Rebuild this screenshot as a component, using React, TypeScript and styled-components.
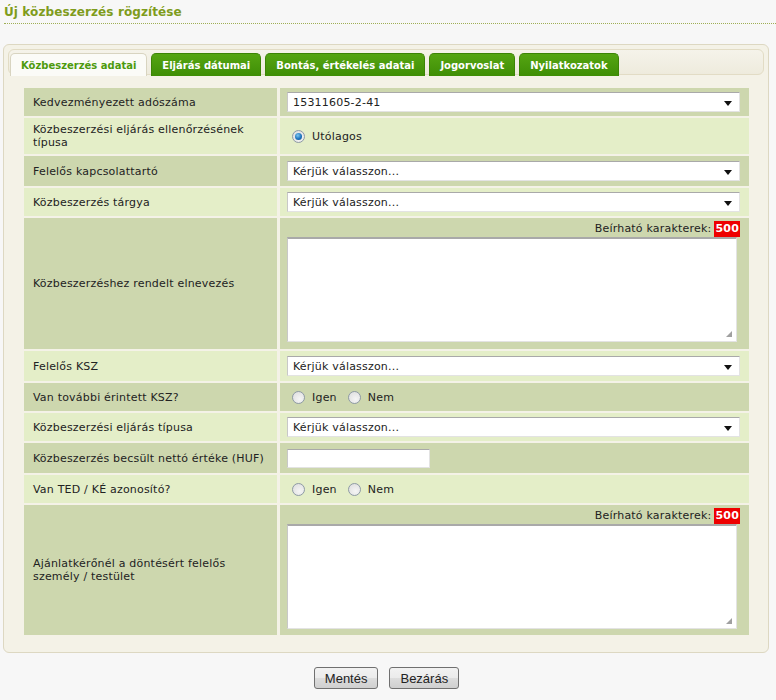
import React from "react";
import styled, { createGlobalStyle } from "styled-components";

const Global = createGlobalStyle`
  html, body { margin: 0; padding: 0; background: #f7f7f7; }
  body { font-family: "DejaVu Sans", Verdana, sans-serif; font-size: 11px; letter-spacing: 0.2px; color: #222; }
`;

const Page = styled.div`
  width: 776px;
  padding-top: 5px;
`;

const Title = styled.h2`
  margin: 0 0 0 4px;
  padding: 0 0 3px 0;
  font-size: 12px;
  letter-spacing: 0.1px;
  font-weight: bold;
  color: #7f9c1c;
  border-bottom: 1px dotted #9fae55;
  line-height: 15px;
`;

const Panel = styled.div`
  margin: 20px 7px 0 3px;
  background: #f4f2e7;
  border: 1px solid #ddd8c2;
  border-radius: 6px;
  padding: 4px 4px 17px 4px;
`;

const TabBar = styled.div`
  display: flex;
  gap: 4px;
  height: 26px;
  padding: 3px 0 0 1px;
  box-sizing: border-box;
  border: 1px solid #e2dcc5;
  border-radius: 6px;
  background: linear-gradient(#f5f3ea, #eeebdd);
`;

const Tab = styled.div<{ $active?: boolean }>`
  display: flex;
  align-items: center;
  padding: 0 10px;
  height: 23px;
  box-sizing: border-box;
  border-radius: 5px 5px 0 0;
  font-size: 10px;
  letter-spacing: 0;
  font-weight: bold;
  color: ${(p) => (p.$active ? "#4d9a0c" : "#fff")};
  background: ${(p) => (p.$active ? "#fbfbf7" : "linear-gradient(#55a512, #3f8e06)")};
  border: 1px solid ${(p) => (p.$active ? "#d8d4c0" : "#3c8406")};
  border-bottom: none;
`;

const Form = styled.div`
  display: grid;
  grid-template-columns: 253px 1fr;
  gap: 2px 3px;
  margin: 13px 15px 0 16px;
`;

const Label = styled.div<{ $dark: boolean; $h: number }>`
  display: flex;
  align-items: center;
  height: ${(p) => p.$h}px;
  padding: 0 10px 0 9px;
  box-sizing: border-box;
  background: ${(p) => (p.$dark ? "#cdd7ae" : "#e4eec8")};
  line-height: 13px;
`;

const Field = styled.div<{ $dark: boolean; $h: number }>`
  display: flex;
  align-items: center;
  gap: 4px;
  height: ${(p) => p.$h}px;
  padding: 0 0 0 7px;
  box-sizing: border-box;
  background: ${(p) => (p.$dark ? "#cdd7ae" : "#e4eec8")};
`;

const AreaField = styled(Field)`
  flex-direction: column;
  align-items: stretch;
  justify-content: flex-start;
  gap: 0;
  padding: 3px 12px 0 7px;
`;

const SelectBox = styled.div`
  position: relative;
  width: 453px;
  height: 20px;
  box-sizing: border-box;
  background: #fff;
  border: 1px solid #e3e3e3;
  border-top-color: #a9a9a9;
  border-left-color: #c8c8c8;
  padding: 0 0 0 5px;
  display: flex;
  align-items: center;
  font-size: 11px;
  &::after {
    content: "";
    position: absolute;
    right: 7px;
    top: 8px;
    border-left: 4px solid transparent;
    border-right: 4px solid transparent;
    border-top: 5px solid #111;
  }
`;

const TextInput = styled.div`
  width: 143px;
  height: 19px;
  box-sizing: border-box;
  background: #fff;
  border: 1px solid #e3e3e3;
  border-top-color: #a9a9a9;
  border-left-color: #c8c8c8;
`;

const Radio = styled.span<{ $checked?: boolean }>`
  position: relative;
  display: inline-block;
  width: 13px;
  height: 13px;
  box-sizing: border-box;
  border-radius: 50%;
  border: 1px solid #8e9aa5;
  background: radial-gradient(circle at 60% 65%, #f5f5f5 0%, #dcdcdc 100%);
  margin: 0 3px 0 5px;
  &::after {
    content: "";
    display: ${(p) => (p.$checked ? "block" : "none")};
    position: absolute;
    left: 2px;
    top: 2px;
    width: 7px;
    height: 7px;
    border-radius: 50%;
    background: radial-gradient(circle at 40% 35%, #7ec8f0 0%, #1e73be 55%, #0d4e8c 100%);
  }
`;

const RadioLabel = styled.span`
  margin-right: 2px;
`;

const Counter = styled.div`
  align-self: flex-end;
  margin-right: -3px;
  height: 16px;
  line-height: 16px;
  display: flex;
  gap: 3px;
`;

const CounterValue = styled.span`
  background: #ee0000;
  color: #fff;
  font-weight: bold;
  padding: 0 1px;
`;

const TextArea = styled.div`
  position: relative;
  width: 450px;
  height: 105px;
  box-sizing: border-box;
  background: #fff;
  border: 1px solid #e3e3e3;
  border-top: 2px solid #a9a9a9;
  border-left-color: #c8c8c8;
  &::after {
    content: "";
    position: absolute;
    right: 4px;
    bottom: 4px;
    width: 6px;
    height: 6px;
    background: radial-gradient(circle, #999 0.7px, transparent 0.8px) 0 0 / 2px 2px;
    clip-path: polygon(100% 0, 100% 100%, 0 100%);
  }
`;

const Buttons = styled.div`
  display: flex;
  justify-content: center;
  gap: 11px;
  margin-top: 14px;
  padding-right: 3px;
`;

const Button = styled.button`
  height: 22px;
  padding: 0 10px;
  font-family: "Liberation Sans", Arial, sans-serif;
  font-size: 13px;
  letter-spacing: 0;
  color: #222;
  border: 1px solid #707070;
  border-radius: 3px;
  background: linear-gradient(#f2f2f2 0%, #ebebeb 50%, #dddddd 51%, #cfcfcf 100%);
`;

type Row = {
  label: React.ReactNode;
  h: number;
  kind: "select" | "radio1" | "radio2" | "area" | "input";
  value?: string;
};

const rows: Row[] = [
  { label: "Kedvezményezett adószáma", h: 28, kind: "select", value: "15311605-2-41" },
  { label: "Közbeszerzési eljárás ellenőrzésének típusa", h: 36, kind: "radio1" },
  { label: "Felelős kapcsolattartó", h: 30, kind: "select", value: "Kérjük válasszon..." },
  { label: "Közbeszerzés tárgya", h: 28, kind: "select", value: "Kérjük válasszon..." },
  { label: "Közbeszerzéshez rendelt elnevezés", h: 131, kind: "area" },
  { label: "Felelős KSZ", h: 30, kind: "select", value: "Kérjük válasszon..." },
  { label: "Van további érintett KSZ?", h: 28, kind: "radio2" },
  { label: "Közbeszerzési eljárás típusa", h: 28, kind: "select", value: "Kérjük válasszon..." },
  { label: "Közbeszerzés becsült nettó értéke (HUF)", h: 30, kind: "input" },
  { label: "Van TED / KÉ azonosító?", h: 28, kind: "radio2" },
  { label: "Ajánlatkérőnél a döntésért felelős személy / testület", h: 130, kind: "area" },
];

const tabs = ["Közbeszerzés adatai", "Eljárás dátumai", "Bontás, értékelés adatai", "Jogorvoslat", "Nyilatkozatok"];

export default function App() {
  return (
    <Page>
      <Global />
      <Title>Új közbeszerzés rögzítése</Title>
      <Panel>
        <TabBar>
          {tabs.map((t, i) => (
            <Tab key={t} $active={i === 0}>{t}</Tab>
          ))}
        </TabBar>
        <Form>
          {rows.map((r, i) => {
            const dark = i % 2 === 0;
            return (
              <React.Fragment key={i}>
                <Label $dark={dark} $h={r.h}>{r.label}</Label>
                {r.kind === "area" ? (
                  <AreaField $dark={dark} $h={r.h}>
                    <Counter>
                      <span>Beírható karakterek:</span>
                      <CounterValue>500</CounterValue>
                    </Counter>
                    <TextArea />
                  </AreaField>
                ) : (
                  <Field $dark={dark} $h={r.h}>
                    {r.kind === "select" && <SelectBox>{r.value}</SelectBox>}
                    {r.kind === "input" && <TextInput />}
                    {r.kind === "radio1" && (
                      <>
                        <Radio $checked />
                        <RadioLabel>Utólagos</RadioLabel>
                      </>
                    )}
                    {r.kind === "radio2" && (
                      <>
                        <Radio />
                        <RadioLabel>Igen</RadioLabel>
                        <Radio />
                        <RadioLabel>Nem</RadioLabel>
                      </>
                    )}
                  </Field>
                )}
              </React.Fragment>
            );
          })}
        </Form>
      </Panel>
      <Buttons>
        <Button>Mentés</Button>
        <Button>Bezárás</Button>
      </Buttons>
    </Page>
  );
}
